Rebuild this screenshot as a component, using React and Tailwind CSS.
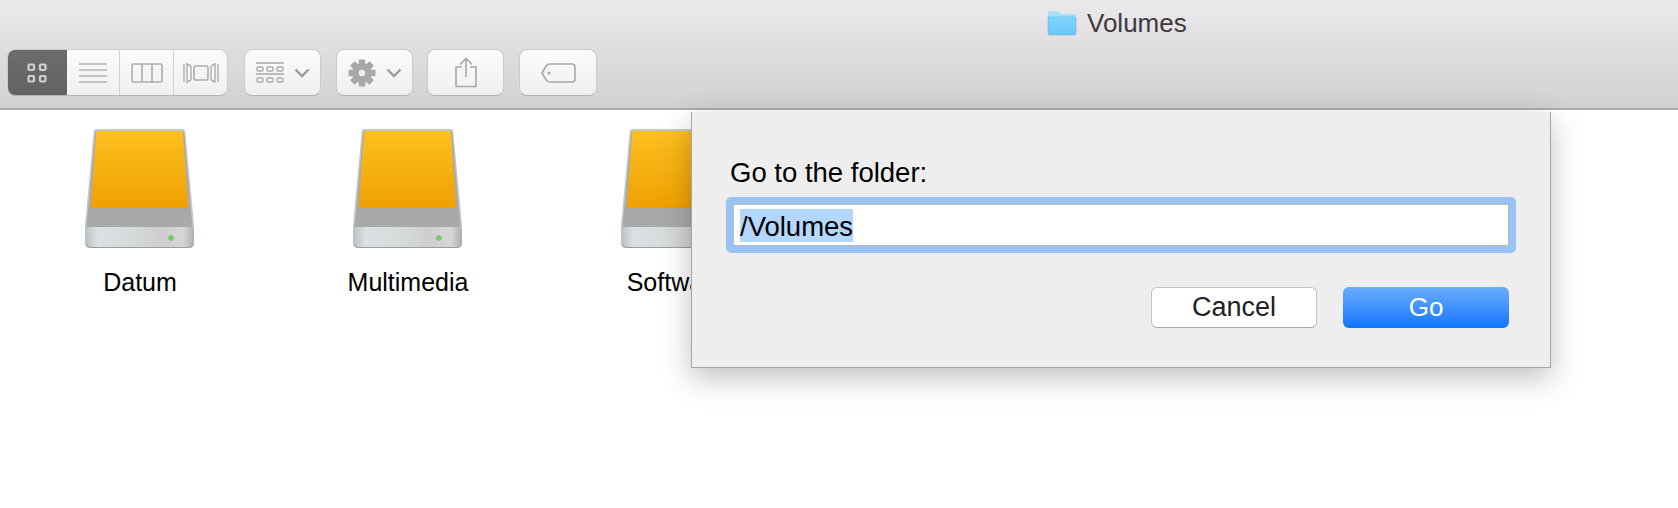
const font = { fontFamily: '"Liberation Sans", Arial, sans-serif' };

function Drive() {
  return (
    <svg width="112" height="122" viewBox="-1 -1 112 122" className="block">
      <defs>
        <linearGradient id="or" x1="0" y1="0" x2="0" y2="1">
          <stop offset="0" stopColor="#fdc01f" />
          <stop offset="1" stopColor="#efa003" />
        </linearGradient>
        <linearGradient id="fr" x1="0" y1="0" x2="1" y2="0">
          <stop offset="0" stopColor="#b9c0c3" />
          <stop offset="0.12" stopColor="#dbe1e3" />
          <stop offset="0.5" stopColor="#d4d8d9" />
          <stop offset="0.7" stopColor="#cfcdcd" />
          <stop offset="0.9" stopColor="#d6d8d8" />
          <stop offset="1" stopColor="#a9adae" />
        </linearGradient>
      </defs>
      <path d="M11 0H98Q100 0 100.300 3L109 96V104H0V96L8.700 3Q9 0 11 0Z" fill="#c5c7c9" />
      <path d="M1.500 98L10 4Q10.300 2 12 2H97Q99 2 99.200 4L107.500 98Z" fill="#a9a9a9" />
      <path d="M13 2H96Q97.800 2 98 4L103 76Q103.200 79 100.500 79H8Q5.500 79 5.800 76L11 4Q11.200 2 13 2Z" fill="url(#or)" />
      <path d="M0 102Q0 98 4 98H105Q109 98 109 102V114Q109 119 104 119H5Q0 119 0 114Z" fill="url(#fr)" />
      <path d="M1 115Q2 118.500 5 118.500H104Q107 118.500 108 115" fill="none" stroke="#9a9c9d" strokeWidth="1" />
      <circle cx="86" cy="109" r="2.500" fill="#69d65f" stroke="#8aa68a" strokeWidth="0.500" />
    </svg>
  );
}

function Item({ label }) {
  return (
    <div className="w-[268px] shrink-0 flex flex-col items-center">
      <Drive />
      <div className="mt-[17px] text-[25px] leading-[30px] text-black">{label}</div>
    </div>
  );
}

function Chevron() {
  return (
    <svg width="16" height="10" viewBox="0 0 16 10" fill="none" stroke="#9b9b9b" strokeWidth="2.400">
      <path d="M1.500 1.500L8 8L14.500 1.500" />
    </svg>
  );
}

function Gear() {
  const teeth = [0, 45, 90, 135];
  return (
    <svg width="28" height="28" viewBox="0 0 30 30">
      {teeth.map((a) => (
        <rect key={a} x="11.500" y="0.500" width="7" height="29" rx="1" fill="#a8a8a8" transform={`rotate(${a} 15 15)`} />
      ))}
      <circle cx="15" cy="15" r="10.500" fill="#a8a8a8" />
      <circle cx="15" cy="15" r="3.500" fill="#efefef" />
    </svg>
  );
}

const btn =
  "h-[47px] rounded-[8px] border border-[#cbcbcb] border-b-[#b4b4b4] bg-gradient-to-b from-[#fbfbfb] to-[#f0f0f0] flex items-center justify-center";

export default function App() {
  return (
    <div className="relative w-[1678px] h-[508px] bg-white overflow-hidden" style={font}>
      <div className="h-[110px] bg-gradient-to-b from-[#ebe9eb] to-[#d2d0d2] border-b-2 border-[#adadad] pt-[7px] pl-[7px]">
        <div className="h-[32px] pl-[1040px] flex items-center gap-[10px]">
          <svg width="30" height="26" viewBox="0 0 30 26">
            <defs>
              <linearGradient id="fo" x1="0" y1="0" x2="0" y2="1">
                <stop offset="0" stopColor="#7ed6fe" />
                <stop offset="1" stopColor="#6cc6fa" />
              </linearGradient>
            </defs>
            <path d="M1 3Q1 1 3 1H10Q12 1 13 3L14 4H27Q29 4 29 6V10H1Z" fill="#a6e0fb" />
            <path d="M1 7H27Q29 7 29 9V23Q29 25 27 25H3Q1 25 1 23Z" fill="url(#fo)" stroke="#68b6e6" strokeWidth="0.600" />
          </svg>
          <span className="text-[26px] leading-[28px] text-[#3c3a3c]">Volumes</span>
        </div>
        <div className="mt-[10px] flex items-center">
          <div className={"w-[221px] overflow-hidden flex " + btn}>
            <div className="w-[60px] h-[47px] -my-px -ml-px bg-gradient-to-b from-[#6c6c6c] to-[#636363] flex items-center justify-center shrink-0">
              <svg width="20" height="20" viewBox="0 0 20 20" fill="none" stroke="#d0d0d0" strokeWidth="2.200">
                <rect x="1.500" y="1.500" width="5.500" height="5.500" rx="1" />
                <rect x="13" y="1.500" width="5.500" height="5.500" rx="1" />
                <rect x="1.500" y="13" width="5.500" height="5.500" rx="1" />
                <rect x="13" y="13" width="5.500" height="5.500" rx="1" />
              </svg>
            </div>
            <div className="w-[53px] h-full flex items-center justify-center border-r border-[#d0d0d0]">
              <svg width="28" height="20" viewBox="0 0 28 20" stroke="#b4b4b4" strokeWidth="1.400">
                <path d="M0 1H28M0 7H28M0 13H28M0 19H28" />
              </svg>
            </div>
            <div className="w-[54px] h-full flex items-center justify-center border-r border-[#d0d0d0]">
              <svg width="32" height="20" viewBox="0 0 32 20" fill="none" stroke="#adadad" strokeWidth="1.600">
                <rect x="1" y="1" width="30" height="18" rx="1.500" />
                <path d="M11 1V19M21 1V19" />
              </svg>
            </div>
            <div className="flex-1 h-full flex items-center justify-center">
              <svg width="36" height="22" viewBox="0 0 36 22" fill="none" stroke="#adadad" strokeWidth="1.400">
                <rect x="11" y="4" width="14" height="14" rx="1.500" strokeWidth="1.600" />
                <path d="M1 2V20M4 1V21M8 4L4 2M8 18L4 20M8 4V18M35 2V20M32 1V21M28 4L32 2M28 18L32 20M28 4V18" />
              </svg>
            </div>
          </div>
          <div className={"ml-[16px] w-[77px] gap-[10px] " + btn}>
            <svg width="28" height="22" viewBox="0 0 28 22" fill="none" stroke="#adadad" strokeWidth="1.400">
              <path d="M0 1H28" strokeWidth="1.600" />
              <rect x="1" y="5" width="6" height="4" rx="1" />
              <rect x="11" y="5" width="6" height="4" rx="1" />
              <rect x="21" y="5" width="6" height="4" rx="1" />
              <path d="M0 12H28" strokeWidth="1.600" />
              <rect x="1" y="16" width="6" height="4" rx="1" />
              <rect x="11" y="16" width="6" height="4" rx="1" />
              <rect x="21" y="16" width="6" height="4" rx="1" />
            </svg>
            <Chevron />
          </div>
          <div className={"ml-[15px] w-[77px] gap-[10px] " + btn}>
            <Gear />
            <Chevron />
          </div>
          <div className={"ml-[14px] w-[77px] " + btn}>
            <svg width="24" height="31" viewBox="0 0 24 31" fill="none" stroke="#a8a8a8" strokeWidth="1.600">
              <path d="M8 10H2V29.500H22V10H16" />
              <path d="M12 20V1.500M6 7.500L12 1.500L18 7.500" />
            </svg>
          </div>
          <div className={"ml-[15px] w-[78px] " + btn}>
            <svg width="36" height="22" viewBox="0 0 36 22" fill="none" stroke="#a8a8a8" strokeWidth="1.600">
              <path d="M10 2H32Q35 2 35 5V17Q35 20 32 20H10Q8 20 6.500 18.500L2 11L6.500 3.500Q8 2 10 2Z" strokeLinejoin="round" />
              <circle cx="9" cy="11" r="1.500" fill="#a8a8a8" stroke="none" />
            </svg>
          </div>
        </div>
      </div>

      <div className="flex pl-[6px] pt-[18px]">
        <Item label="Datum" />
        <Item label="Multimedia" />
        <Item label="Software" />
      </div>

      <div className="absolute left-[691px] top-[112px] w-[860px] h-[256px] bg-[#eeeeee] border-x border-b border-[#a5a5a5] border-t-[#c9c9c9] shadow-[0_10px_28px_rgba(0,0,0,0.25)] pl-[34px] pr-[34px] pt-[46px]">
        <div className="pl-[4px] text-[27.500px] leading-[30px] text-black">Go to the folder:</div>
        <div className="mt-[9px] h-[56px] w-[790px] rounded-[5px] bg-[#97c4f4] p-[7px]">
          <div className="h-[42px] bg-white border border-[#b9b9b9] pl-[6px] pt-[4px]">
            <span className="block w-fit h-[33px] bg-[#b3d7ff] text-[27.500px] leading-[36px] text-black">/Volumes</span>
          </div>
        </div>
        <div className="mt-[34px] flex justify-end pr-[7px] gap-[26px]">
          <div className="w-[166px] h-[41px] rounded-[6px] bg-white border border-[#c4c4c4] border-b-[#aaaaaa] flex items-center justify-center text-[27px] text-[#222222]">
            Cancel
          </div>
          <div className="w-[166px] h-[41px] rounded-[6px] bg-gradient-to-b from-[#68adfd] to-[#0a74fe] flex items-center justify-center text-[26px] text-white">
            Go
          </div>
        </div>
      </div>
    </div>
  );
}
